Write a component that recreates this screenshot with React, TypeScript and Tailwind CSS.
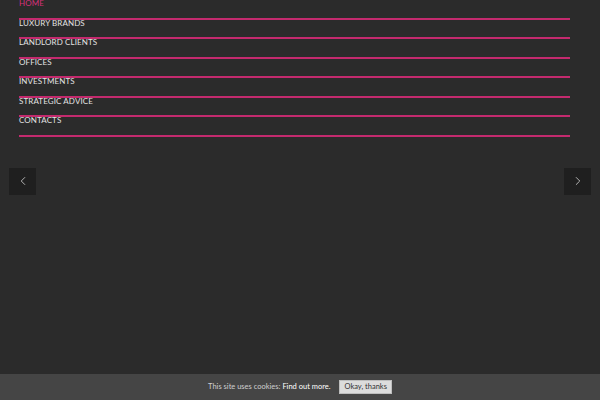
import { ChevronLeft, ChevronRight } from 'lucide-react'

const items = ['HOME', 'LUXURY BRANDS', 'LANDLORD CLIENTS', 'OFFICES', 'INVESTMENTS', 'STRATEGIC ADVICE', 'CONTACTS']

export default function App() {
  return (
    <div className="relative h-[400px] w-[600px] overflow-hidden bg-[#2b2b2b]" style={{ fontFamily: 'Lato, "Open Sans", sans-serif' }}>
      <nav className="px-[19px] pr-[30px]">
        <ul>
          {items.map((it, i) => (
            <li key={it} className="h-[19.5px] border-b-2 border-[#c42a6e]">
              <a className={`block text-[8px] leading-[7px] tracking-[0.1px] ${i === 0 ? 'text-[#d6307a]' : 'text-[#e2e2e2]'}`}>{it}</a>
            </li>
          ))}
        </ul>
      </nav>

      <div className="mt-[31px] flex justify-between px-[9px]">
        <button className="flex h-[27px] w-[27px] items-center justify-center bg-[#1f1f1f] text-[#e8e8e8]">
          <ChevronLeft size={14} strokeWidth={1.25} />
        </button>
        <button className="flex h-[27px] w-[27px] items-center justify-center bg-[#1f1f1f] text-[#e8e8e8]">
          <ChevronRight size={14} strokeWidth={1.25} />
        </button>
      </div>

      <div className="absolute bottom-0 left-0 right-0 flex h-[26px] items-center justify-center gap-[9px] bg-[#454545]">
        <span className="text-[7.5px] text-[#cfcfcf]">
          This site uses cookies: <a className="text-white">Find out more.</a>
        </span>
        <button className="h-[14px] border border-[#bdbdbd] bg-[#dcdcdc] px-[4px] text-[7.5px] leading-[12px] text-[#333]">Okay, thanks</button>
      </div>
    </div>
  )
}
